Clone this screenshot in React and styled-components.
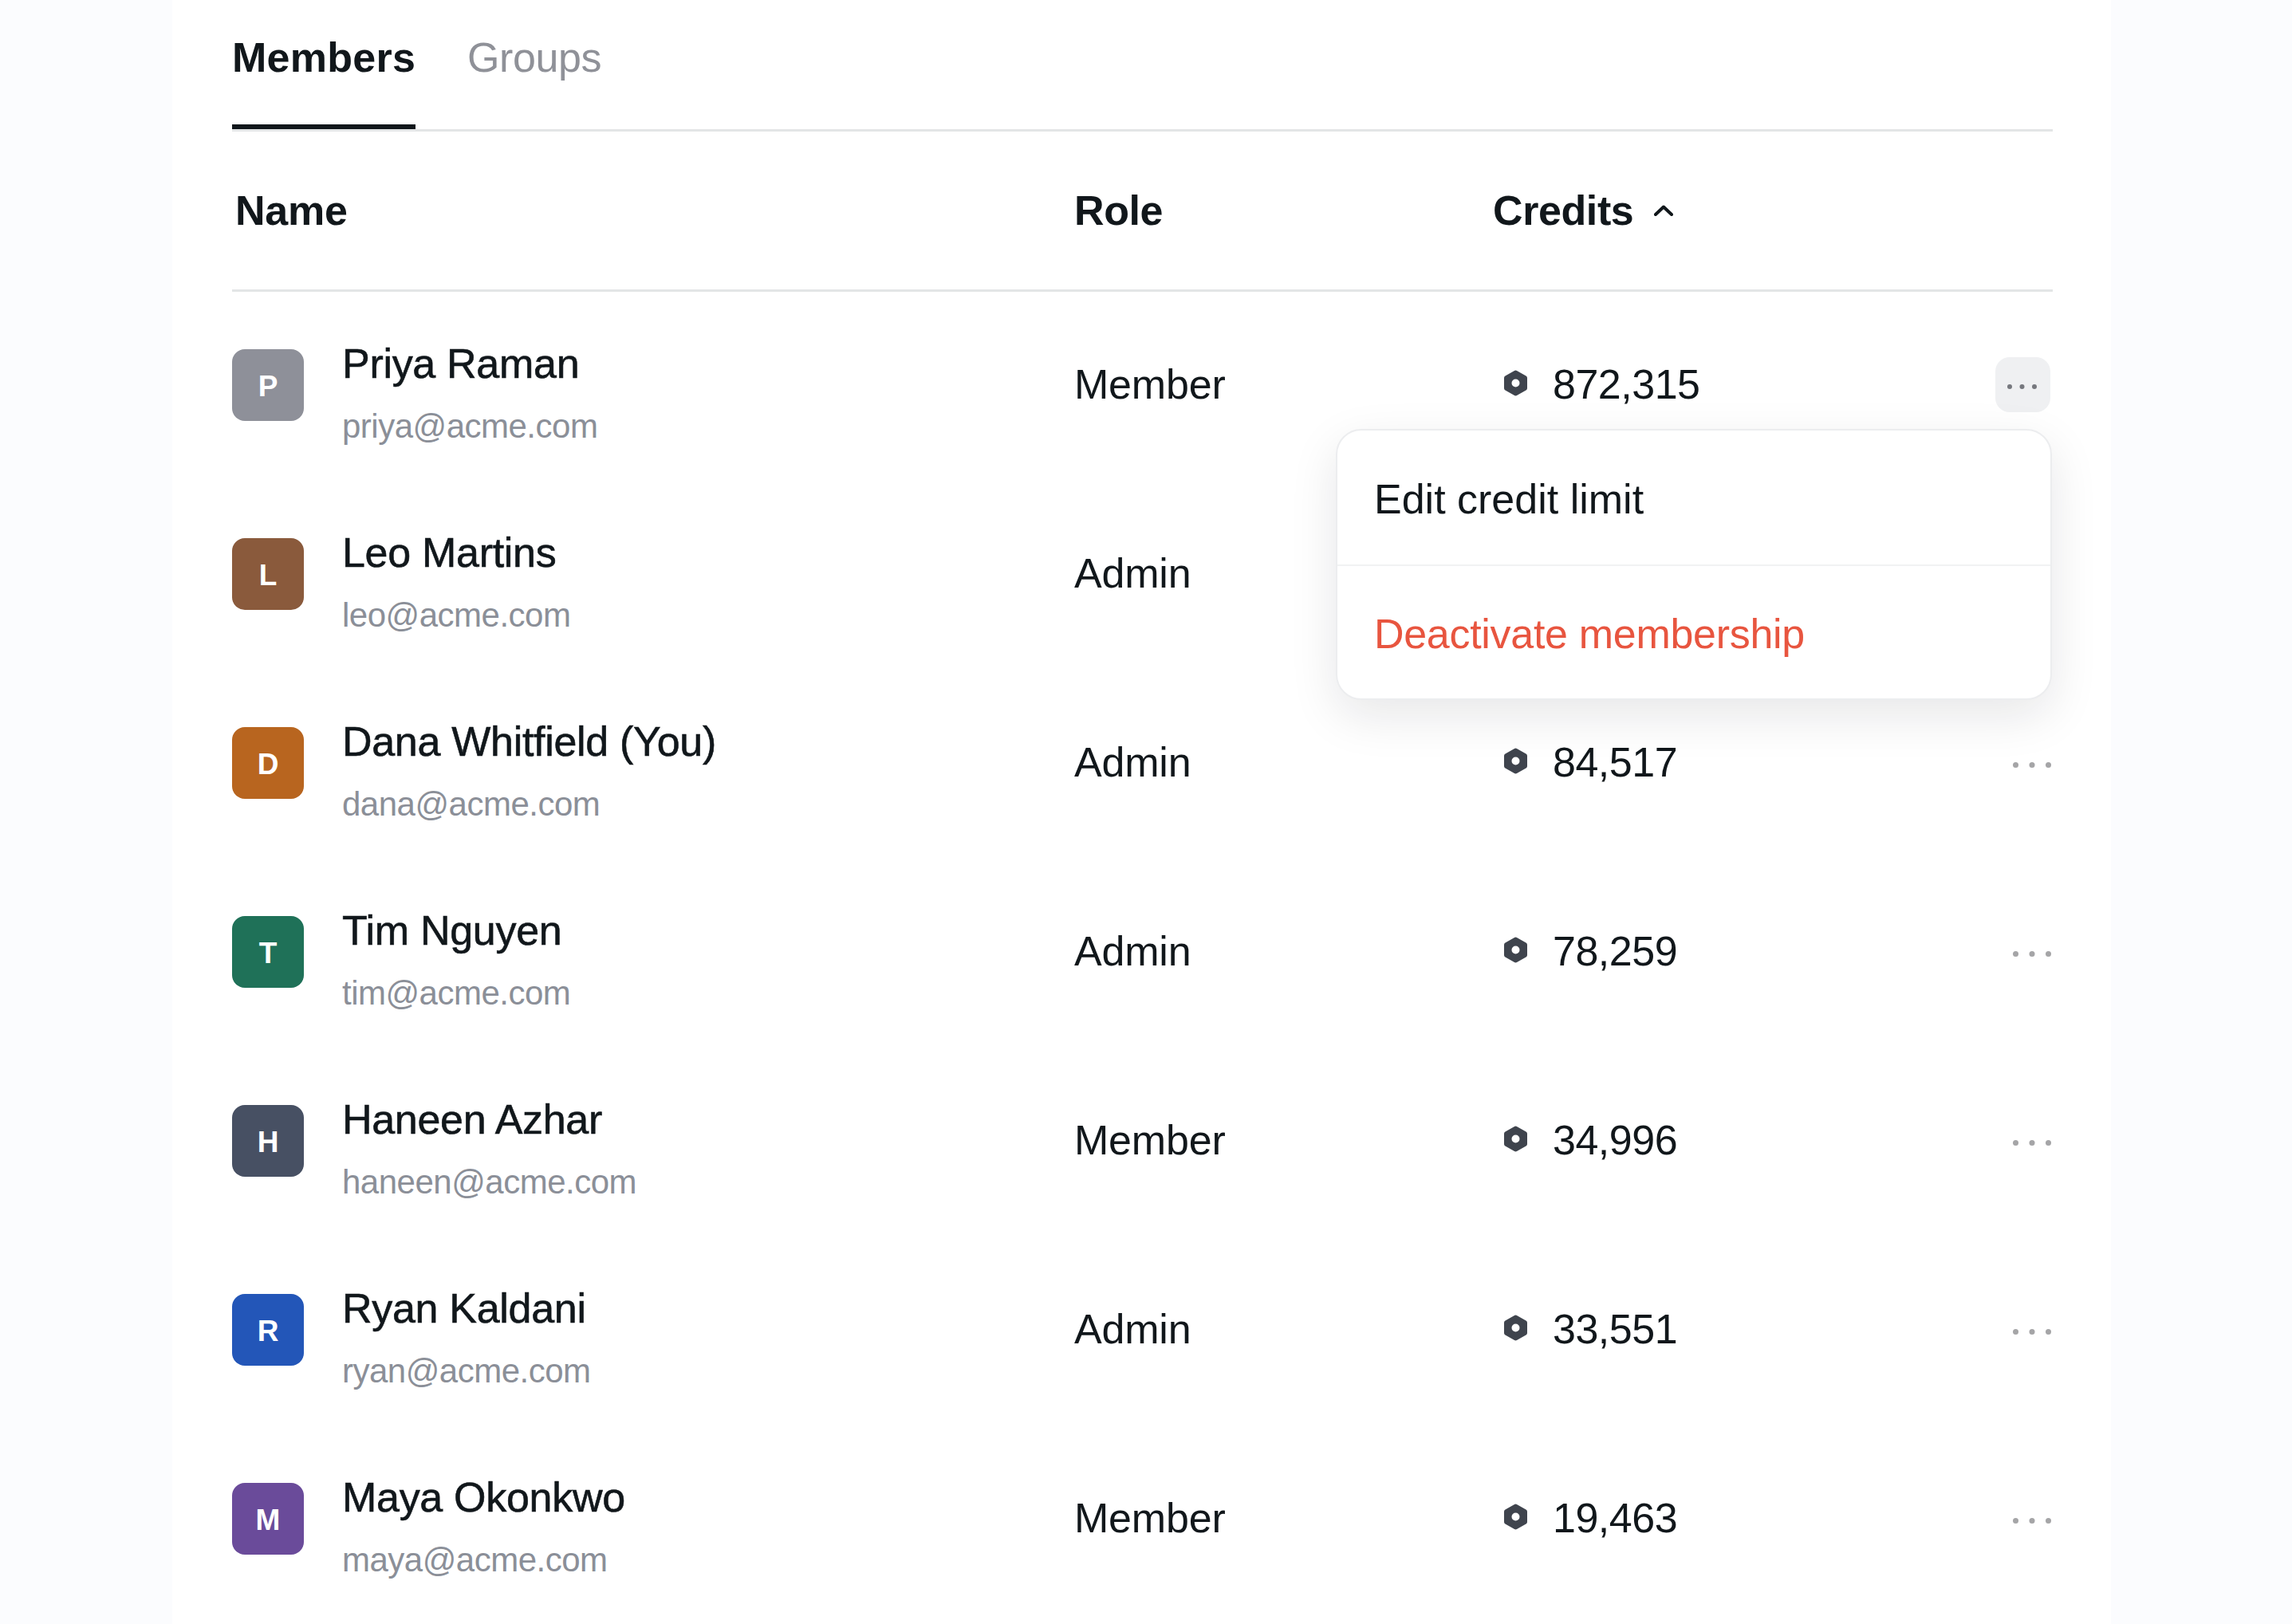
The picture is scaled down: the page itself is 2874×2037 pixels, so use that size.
import React from 'react'
import styled, { createGlobalStyle } from 'styled-components'

const members = [
  { name: 'Priya Raman', email: 'priya@acme.com', role: 'Member', credits: '872,315', color: '#8e9099', open: true },
  { name: 'Leo Martins', email: 'leo@acme.com', role: 'Admin', color: '#8a5a3c' },
  { name: 'Dana Whitfield (You)', email: 'dana@acme.com', role: 'Admin', credits: '84,517', color: '#b8651f' },
  { name: 'Tim Nguyen', email: 'tim@acme.com', role: 'Admin', credits: '78,259', color: '#1f7158' },
  { name: 'Haneen Azhar', email: 'haneen@acme.com', role: 'Member', credits: '34,996', color: '#475063' },
  { name: 'Ryan Kaldani', email: 'ryan@acme.com', role: 'Admin', credits: '33,551', color: '#2356b8' },
  { name: 'Maya Okonkwo', email: 'maya@acme.com', role: 'Member', credits: '19,463', color: '#6a4b9a' },
]

export default function App() {
  return (
    <Page>
      <GlobalStyle />
      <Panel>
        <Tabs>
          <Tab $active>Members</Tab>
          <Tab>Groups</Tab>
        </Tabs>
        <HeaderRow>
          <NameHead>Name</NameHead>
          <span>Role</span>
          <CreditsHead>
            Credits
            <Chevron viewBox="0 0 24 14">
              <polyline points="2,12 12,2.5 22,12" />
            </Chevron>
          </CreditsHead>
        </HeaderRow>
        {members.map((m) => (
          <Row key={m.email}>
            <Person>
              <Avatar $color={m.color}>{m.name[0]}</Avatar>
              <PersonText>
                <Name>{m.name}</Name>
                <Email>{m.email}</Email>
              </PersonText>
            </Person>
            <Cell>{m.role}</Cell>
            <Cell>
              {m.credits && (
                <Credits>
                  <Hex viewBox="0 0 29 33">
                    <path
                      fillRule="evenodd"
                      d="M13 .9a3 3 0 0 1 3 0l11.5 6.6a3 3 0 0 1 1.5 2.6v12.8a3 3 0 0 1-1.5 2.6L16 32.1a3 3 0 0 1-3 0L1.500 25.500a3 3 0 0 1-1.500-2.600V10.100a3 3 0 0 1 1.500-2.600ZM14.500 11.500a5 5 0 1 0 0 10 5 5 0 0 0 0-10Z"
                    />
                  </Hex>
                  {m.credits}
                </Credits>
              )}
            </Cell>
            {m.open ? (
              <ActionButton>
                <ButtonDots viewBox="0 0 37 6">
                  <circle cx="3" cy="3" r="3" />
                  <circle cx="18.500" cy="3" r="3" />
                  <circle cx="34" cy="3" r="3" />
                </ButtonDots>
              </ActionButton>
            ) : (
              <RowDots viewBox="0 0 48 7">
                <circle cx="3.500" cy="3.500" r="3.500" />
                <circle cx="24" cy="3.500" r="3.500" />
                <circle cx="44.500" cy="3.500" r="3.500" />
              </RowDots>
            )}
            {m.open && (
              <Menu>
                <MenuItem>Edit credit limit</MenuItem>
                <MenuItem $danger>Deactivate membership</MenuItem>
              </Menu>
            )}
          </Row>
        ))}
      </Panel>
    </Page>
  )
}

const GlobalStyle = createGlobalStyle`
  html, body {
    margin: 0;
    padding: 0;
    background: #fbfcfe;
  }
  body {
    font-family: "Liberation Sans", Arial, sans-serif;
    color: #11171b;
  }
`

const Page = styled.div`
  height: 2037px;
  overflow: hidden;
  display: flex;
`

const Panel = styled.main`
  width: 2431px;
  margin-left: 216px;
  padding: 0 73px 0 75px;
  box-sizing: border-box;
  background: #fff;
`

const Tabs = styled.nav`
  display: flex;
  gap: 65px;
  height: 165px;
  box-sizing: border-box;
  border-bottom: 3px solid #e3e5e6;
`

const Tab = styled.div`
  height: ${(p) => (p.$active ? '162px' : '165px')};
  box-sizing: border-box;
  padding-top: 42px;
  font-size: 52px;
  line-height: 60px;
  letter-spacing: ${(p) => (p.$active ? '0.25px' : '-0.4px')};
  font-weight: ${(p) => (p.$active ? 700 : 400)};
  color: ${(p) => (p.$active ? '#11171b' : '#8f9198')};
  border-bottom: ${(p) => (p.$active ? '6px solid #11171b' : 'none')};
`

const HeaderRow = styled.div`
  display: grid;
  grid-template-columns: 1056px 525px 1fr;
  align-items: center;
  height: 201px;
  box-sizing: border-box;
  border-bottom: 3px solid #e3e5e6;
  font-size: 52px;
  font-weight: 700;
  letter-spacing: -0.4px;
`

const NameHead = styled.span`
  padding-left: 4px;
  letter-spacing: -0.2px;
`

const CreditsHead = styled.span`
  display: flex;
  align-items: center;
  gap: 26px;
`

const Chevron = styled.svg`
  width: 24px;
  height: 14px;
  fill: none;
  stroke: #11171b;
  stroke-width: 4;
  stroke-linecap: round;
  stroke-linejoin: round;
`

const Row = styled.div`
  position: relative;
  display: grid;
  grid-template-columns: 1056px 525px 1fr auto;
  align-items: center;
  height: 237px;
  box-sizing: border-box;
  padding-bottom: 4px;
`

const Person = styled.div`
  display: flex;
  align-items: center;
  gap: 48px;
`

const Avatar = styled.div`
  width: 90px;
  height: 90px;
  box-sizing: border-box;
  padding-top: 4px;
  border-radius: 16px;
  background: ${(p) => p.$color};
  color: #fff;
  display: flex;
  align-items: center;
  justify-content: center;
  font-size: 37px;
  font-weight: 700;
`

const PersonText = styled.div`
  display: flex;
  flex-direction: column;
  gap: 25px;
  transform: translateY(10px);
`

const Name = styled.div`
  font-size: 52px;
  line-height: 60px;
  letter-spacing: -0.3px;
  -webkit-text-stroke: 0.6px #11171b;
`

const Email = styled.div`
  font-size: 42px;
  line-height: 48px;
  color: #8b8f98;
  letter-spacing: -0.5px;
`

const Cell = styled.div`
  font-size: 52px;
  line-height: 60px;
  letter-spacing: -0.2px;
  padding-bottom: 2px;
`

const Credits = styled.div`
  display: flex;
  align-items: center;
  gap: 32px;
  padding-left: 14px;
  letter-spacing: -0.5px;
`

const Hex = styled.svg`
  width: 29px;
  height: 33px;
  margin-bottom: 3px;
  fill: #3f444d;
`

const ActionButton = styled.button`
  width: 69px;
  height: 69px;
  margin: 0 3px 0 0;
  padding: 4px 2px 0 0;
  border: 0;
  border-radius: 18px;
  background: #eff0f2;
  display: flex;
  align-items: center;
  justify-content: center;
`

const ButtonDots = styled.svg`
  display: block;
  width: 37px;
  height: 6px;
  fill: #76787e;
`

const RowDots = styled.svg`
  display: block;
  width: 48px;
  height: 7px;
  margin: 6px 2px 0 0;
  fill: #a5a5a7;
`

const Menu = styled.div`
  position: absolute;
  z-index: 2;
  top: 172px;
  right: 1px;
  width: 898px;
  box-sizing: border-box;
  background: #fff;
  border: 2px solid #ecedef;
  border-radius: 32px;
  box-shadow: 0 20px 60px rgba(20, 24, 34, 0.1);
`

const MenuItem = styled.div`
  height: 168px;
  box-sizing: border-box;
  padding: 3px 46px 0;
  display: flex;
  align-items: center;
  font-size: 52px;
  letter-spacing: ${(p) => (p.$danger ? '-0.3px' : '0')};
  color: ${(p) => (p.$danger ? '#e8553f' : '#11171b')};
  & + & {
    border-top: 2px solid #f1f2f3;
  }
`
